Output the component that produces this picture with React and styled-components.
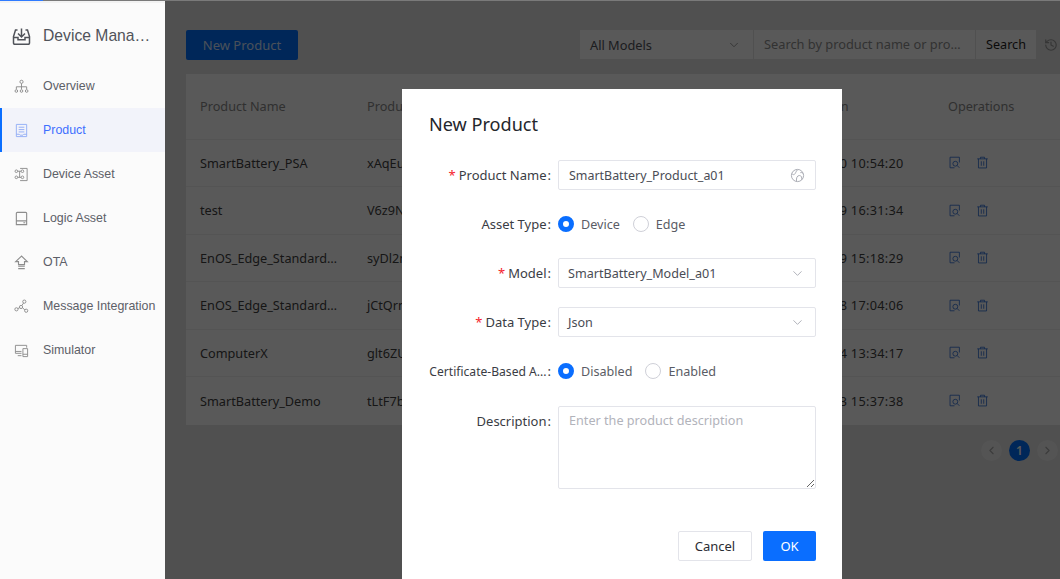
import React from "react";
import styled, { createGlobalStyle } from "styled-components";
import { ChevronDown, ChevronLeft, ChevronRight, History } from "lucide-react";

const Global = createGlobalStyle`
  html, body { margin: 0; padding: 0; width: 1060px; height: 579px; overflow: hidden; background: #fff; }
  *, *::before, *::after { box-sizing: border-box; }
`;
const FONT = `"Noto Sans", "Open Sans", "Noto Sans CJK SC", sans-serif`;

const Page = styled.div`
  display: flex; width: 1060px; height: 579px; overflow: hidden; position: relative; font-family: ${FONT};
`;
const TopBar = styled.div`
  position: absolute; top: 0; left: 0; right: 0; height: 1px; background: #7a7a7a; z-index: 5;
  &::before { content: ""; display: block; width: 43px; height: 1px; background: #2f7bff; }
`;
const Sidebar = styled.aside`
  width: 165px; flex: none; background: #fbfbfb; border-top: 3px solid #f2f2f2;
  font-family: "Liberation Sans", Arial, sans-serif; display: flex; flex-direction: column;
`;
const Brand = styled.div`
  display: flex; align-items: center; height: 66px; padding-left: 12px; gap: 12px; color: #50535a; font-size: 15.7px; margin-bottom: -3px;
`;
const BrandText = styled.span`
  width: 110px; white-space: nowrap; overflow: hidden; text-overflow: ellipsis;
`;
const Nav = styled.nav` display: flex; flex-direction: column; margin-top: -2px; `;
const NavItem = styled.div`
  display: flex; align-items: center; height: 44px; padding-left: ${p => (p.$active ? "12px" : "14px")}; gap: 14px;
  font-size: 12.4px; white-space: nowrap; color: ${p => (p.$active ? "#3f6fff" : "#5d6068")};
  background: ${p => (p.$active ? "#f2f3fa" : "transparent")};
  border-left: ${p => (p.$active ? "2px solid #0a6eff" : "none")};
  svg { flex: none; width: 15px; height: 15px; color: ${p => (p.$active ? "#93aef5" : "#8d8d8d")}; }
`;
const Main = styled.main`
  flex: 1; min-width: 0; position: relative; background: #e5e5e5; padding: 30px 0 0 21px;
`;
const Toolbar = styled.div`
  display: flex; align-items: flex-start; justify-content: space-between; height: 44px; padding-right: 2px;
`;
const PrimaryButton = styled.button`
  width: 112px; height: 30px; border: none; border-radius: 2px; background: #0070ff; color: #d5e5ff; font: 13px ${FONT}; padding: 0;
`;
const Filters = styled.div` display: flex; align-items: center; height: 29px; `;
const FilterSelect = styled.div`
  width: 174px; height: 29px; background: #fff; color: #50535a; font-size: 12.8px; display: flex; align-items: center;
  justify-content: space-between; padding: 0 12px 0 10px; border-right: 1px solid #e5e5e5;
  svg { width: 14px; height: 14px; color: #888; }
`;
const FilterInput = styled.div`
  width: 222px; height: 29px; background: #fff; color: #8f8f8f; font-size: 12.8px; padding: 0 10px; line-height: 29px;
  white-space: nowrap; overflow: hidden; text-overflow: ellipsis; border-right: 1px solid #e5e5e5;
`;
const SearchBtn = styled.div`
  width: 60px; height: 29px; background: #fff; color: #1e1e1e; font-size: 12.6px; text-align: center; line-height: 29px;
`;
const HistoryBtn = styled.div`
  margin-left: 8px; color: #9a9a9a; display: flex; svg { width: 14px; height: 14px; }
`;
const Table = styled.div` background: #fff; font-size: 12.7px; color: #555; `;
const Row = styled.div`
  display: grid; grid-template-columns: 167px 411px 170px 1fr; align-items: center;
  height: ${p => (p.$head ? "65.5px" : "47.5px")};
  color: ${p => (p.$head ? "#8a8a8a" : "#3f3f3f")};
  border-bottom: ${p => (p.$last ? "none" : "1px solid #f0f0f0")};
`;
const Cell = styled.div`
  padding: 0 13px 0 14px; white-space: nowrap; overflow: hidden; text-overflow: ellipsis;
  letter-spacing: ${p => (p.$time ? ".3px" : "0")};
`;
const OpIcons = styled.div`
  display: flex; gap: 15px; padding-left: 14px; color: #2b6cd6;
  svg { width: 13px; height: 13px; }
`;
const Pager = styled.div`
  display: flex; justify-content: flex-end; gap: 7px; margin-top: 15px; padding-right: 2px;
`;
const PageDot = styled.div`
  width: 21px; height: 21px; border-radius: 50%; display: flex; align-items: center; justify-content: center; font-size: 12px; font-weight: 600;
  background: ${p => (p.$active ? "#0070ff" : "#f0f0f0")}; color: ${p => (p.$active ? "#fff" : "#aaa")};
  svg { width: 13px; height: 13px; }
`;
const Overlay = styled.div`
  position: absolute; inset: 0; background: rgba(0,0,0,.65); padding: 89px 0 0 237px; overflow: hidden;
`;
const Modal = styled.section`
  width: 440px; height: 520px; background: #fff; padding: 23px 26px 0 27px; color: #33353c;
`;
const Title = styled.h2`
  margin: 0 0 24px; font: 400 18.1px/24px ${FONT}; color: #24262c;
`;
const Form = styled.div` display: flex; flex-direction: column; gap: 19px; `;
const FormRow = styled.div`
  display: grid; grid-template-columns: 122px 1fr; column-gap: 7px; align-items: ${p => (p.$top ? "flex-start" : "center")};
  min-height: 30px; margin-top: ${p => (p.$top ? "1px" : "0")};
`;
const Label = styled.label`
  display: flex; justify-content: flex-end; align-items: baseline; white-space: nowrap; color: #3a3c44;
  font-size: ${p => (p.$tight ? "12.1px" : "13px")};
  line-height: ${p => (p.$top ? "30px" : "20px")};
  i { color: #f5222d; font-style: normal; margin-right: 3px; }
  b { font-weight: 400; margin-left: 1px; font-size: 13px; }
`;
const Field = styled.div`
  height: 30px; border: 1px solid #e3e4ea; border-radius: 2px; display: flex; align-items: center; justify-content: space-between;
  padding: ${p => (p.$select ? "0 10px 0 9px" : "0 10px")}; font-size: 12.6px; color: #4a4c55;
  svg { width: 15px; height: 15px; color: #a5a7b0; flex: none; }
`;
const TextInput = styled.input`
  border: none; outline: none; padding: 0; font: 12.45px ${FONT}; color: #4a4c55; flex: 1; min-width: 0; background: transparent;
`;
const TextArea = styled.textarea`
  display: block; width: 100%; height: 83px; border: 1px solid #e3e4ea; border-radius: 2px; outline: none; padding: 3px 10px;
  font: 12.65px/20px ${FONT}; color: #4a4c55;
  &::placeholder { color: #b2b3bb; opacity: 1; }
`;
const RadioGroup = styled.div` display: flex; align-items: center; gap: 13px; `;
const Radio = styled.span`
  display: inline-flex; align-items: center; gap: 7px; font-size: 12.6px; color: #5a5c65;
  &::before {
    content: ""; width: 16px; height: 16px; border-radius: 50%; background: #fff; flex: none;
    border: ${p => (p.$on ? "5px solid #0a6eff" : "1px solid #cfd0d8")};
  }
`;
const Footer = styled.div` display: flex; justify-content: flex-end; gap: 11px; margin-top: 42px; `;
const GhostButton = styled.button`
  width: 74px; height: 30px; background: #fff; border: 1px solid #e3e4ea; border-radius: 2px; font: 13px ${FONT}; color: #2b2d33; padding: 0;
`;
const OkButton = styled.button`
  width: 53px; height: 30px; background: #0a6eff; border: none; border-radius: 2px; font: 13px ${FONT}; color: #fff; padding: 0;
`;

const S = ({ children, ...p }) => (
  <svg viewBox="0 0 16 16" fill="none" stroke="currentColor" strokeWidth="1" {...p}>{children}</svg>
);
const LogoIcon = () => (
  <svg width="19" height="19" viewBox="0 0 19 19" fill="none" stroke="#50535a" strokeWidth="1.5" style={{ flex: "none" }}>
    <path d="M9.5 1.5v8M6 6.5l3.5 3.5L13 6.5" />
    <path d="M5.5 3H3.5L1.5 9.5V16a1.2 1.2 0 0 0 1.2 1.2h13.6A1.2 1.2 0 0 0 17.5 16V9.5L15.5 3h-2" />
    <path d="M1.5 10.5H6v2.3h7v-2.3h4.5" />
  </svg>
);
const OverviewIcon = () => (
  <S><circle cx="8" cy="3" r="1.7" /><path d="M8 4.8v6M2.5 11V8.3h11V11" /><circle cx="2.5" cy="12.8" r="1.4" /><circle cx="8" cy="12.8" r="1.4" /><circle cx="13.5" cy="12.8" r="1.4" /></S>
);
const ProductIcon = () => (
  <S><path d="M2.5 1.5h11v13h-11z" /><path d="M5 4.5h6M5 7h6M5 9.5h6M2.5 12h3l1 1h3l1-1h3" /></S>
);
const AssetIcon = () => (
  <S><path d="M6.5 1.5h7.5v13H6.5" /><circle cx="2.5" cy="4.5" r="1.4" /><circle cx="2.5" cy="11" r="1.4" /><circle cx="9" cy="4.5" r="1.4" /><circle cx="9" cy="11" r="1.4" /><path d="M4 4.5h3.5M4 11h3.5M6 4.5v6.5" /></S>
);
const LogicIcon = () => (
  <S strokeWidth="1.2"><path d="M3.5 1.5h9a1 1 0 0 1 1 1V14.5h-11V2.5a1 1 0 0 1 1-1zM2.5 10.5h11M10 12.5h2" /></S>
);
const OtaIcon = () => (
  <S strokeWidth="1.2"><path d="M8 1.2L1.8 7h3v3.2h6.4V7h3zM4.5 12h7M4.5 14.5h7" /></S>
);
const MessageIcon = () => (
  <S><circle cx="11" cy="2.8" r="1.7" /><circle cx="2.6" cy="11" r="1.7" /><circle cx="13" cy="12.5" r="1.7" /><circle cx="7.5" cy="8.5" r="1.7" /><path d="M10.2 4.3L8.3 7M4.2 10.2L6 9.2M9.1 9.4l2.5 2.2" /></S>
);
const SimIcon = () => (
  <S><path d="M8 11H1.5V2.5h12v2.5M4 13.5h4M1.5 9h6.5" /><path d="M9.5 6h5v8.5h-5zM9.5 12h5" /></S>
);
const GlobeIcon = () => (
  <S><circle cx="8" cy="8" r="6.5" /><path d="M2 6c2 2 3 1 4-1 .6-1.3 1-2 2-3M7 14c-.5-3 .5-6 3-6 2 0 3 2 2.5 4.5M14 6c-1-1-2-1.5-3-1" /></S>
);
const ViewIcon = () => (
  <S><path d="M14 8V1.5H2.500v13H8" /><circle cx="9" cy="9.5" r="3" /><path d="M11.2 11.7l2.8 2.8" /></S>
);
const TrashIcon = () => (
  <S><path d="M1.500 3.5h13M5.500 3.5V1.5h5v2M3 3.5v11.2h10V3.5M6.500 6.5v5.5M9.500 6.5v5.5" /></S>
);

const rows = [
  ["SmartBattery_PSA", "xAqEu6Kd3P", "2020-07-10 10:54:20"],
  ["test", "V6z9NbT2wQ", "2020-06-29 16:31:34"],
  ["EnOS_Edge_Standard_Model", "syDl2mRc8F", "2020-06-19 15:18:29"],
  ["EnOS_Edge_Standard_Product", "jCtQrnY5hA", "2020-06-18 17:04:06"],
  ["ComputerX", "glt6ZUe4Xo", "2020-06-14 13:34:17"],
  ["SmartBattery_Demo", "tLtF7bM1sJ", "2020-06-03 15:37:38"],
];
const navItems = [
  ["Overview", OverviewIcon],
  ["Product", ProductIcon, true],
  ["Device Asset", AssetIcon],
  ["Logic Asset", LogicIcon],
  ["OTA", OtaIcon],
  ["Message Integration", MessageIcon],
  ["Simulator", SimIcon],
];
const thinChevron = <ChevronDown strokeWidth={1.4} />;

export default function App() {
  return (
    <Page>
      <Global />
      <TopBar />
      <Sidebar>
        <Brand><LogoIcon /><BrandText>Device Management</BrandText></Brand>
        <Nav>
          {navItems.map(([label, Icon, active]) => (
            <NavItem key={label} $active={active}><Icon />{label}</NavItem>
          ))}
        </Nav>
      </Sidebar>
      <Main>
        <Toolbar>
          <PrimaryButton>New Product</PrimaryButton>
          <Filters>
            <FilterSelect>All Models{thinChevron}</FilterSelect>
            <FilterInput>Search by product name or product key</FilterInput>
            <SearchBtn>Search</SearchBtn>
            <HistoryBtn><History /></HistoryBtn>
          </Filters>
        </Toolbar>
        <Table>
          <Row $head>
            <Cell>Product Name</Cell><Cell>Product Key</Cell><Cell $time>Created On</Cell><Cell>Operations</Cell>
          </Row>
          {rows.map((r, i) => (
            <Row key={r[1]} $last={i === rows.length - 1}>
              <Cell>{r[0]}</Cell><Cell>{r[1]}</Cell><Cell $time>{r[2]}</Cell>
              <OpIcons><ViewIcon /><TrashIcon /></OpIcons>
            </Row>
          ))}
        </Table>
        <Pager>
          <PageDot><ChevronLeft /></PageDot>
          <PageDot $active>1</PageDot>
          <PageDot><ChevronRight /></PageDot>
        </Pager>
        <Overlay>
          <Modal>
            <Title>New Product</Title>
            <Form>
              <FormRow>
                <Label><i>*</i>Product Name<b>:</b></Label>
                <Field><TextInput readOnly value="SmartBattery_Product_a01" /><GlobeIcon /></Field>
              </FormRow>
              <FormRow>
                <Label>Asset Type<b>:</b></Label>
                <RadioGroup><Radio $on>Device</Radio><Radio>Edge</Radio></RadioGroup>
              </FormRow>
              <FormRow>
                <Label><i>*</i>Model<b>:</b></Label>
                <Field $select>SmartBattery_Model_a01{thinChevron}</Field>
              </FormRow>
              <FormRow>
                <Label><i>*</i>Data Type<b>:</b></Label>
                <Field $select>Json{thinChevron}</Field>
              </FormRow>
              <FormRow>
                <Label $tight>Certificate-Based A...<b>:</b></Label>
                <RadioGroup><Radio $on>Disabled</Radio><Radio>Enabled</Radio></RadioGroup>
              </FormRow>
              <FormRow $top>
                <Label $top>Description<b>:</b></Label>
                <TextArea placeholder="Enter the product description" />
              </FormRow>
            </Form>
            <Footer>
              <GhostButton>Cancel</GhostButton>
              <OkButton>OK</OkButton>
            </Footer>
          </Modal>
        </Overlay>
      </Main>
    </Page>
  );
}
